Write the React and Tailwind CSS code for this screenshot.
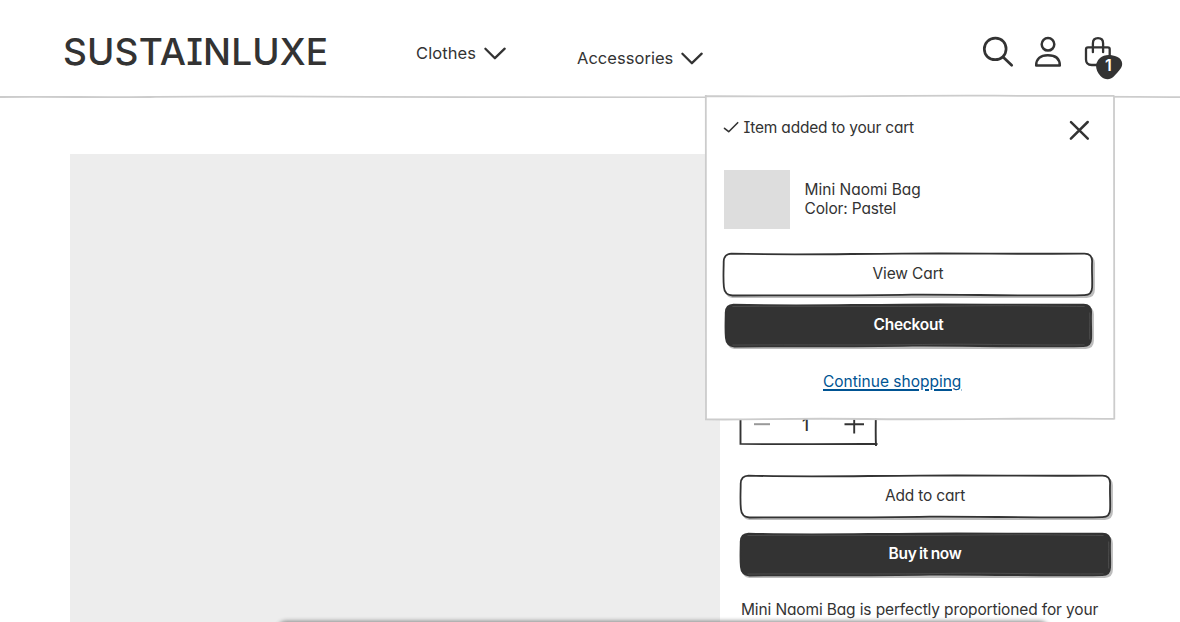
import React from "react";

const FONT = "font-['Inter','Liberation_Sans',sans-serif] [font-feature-settings:'cv11','cv08','ss03']";

function SearchIcon() {
  return (
    <svg className="block h-[34px] w-[34px] shrink-0" viewBox="981 35 34 34" fill="none" stroke="#333" strokeWidth="2.7" strokeLinecap="round">
      <path d="M995.3 38.2C1002 38.1 1006.2 43 1006.1 49C1006 55.2 1001.3 59.7 995.2 59.7C989 59.7 984.3 55.2 984.3 49C984.3 42.9 989 38.3 995.3 38.2Z" />
      <path d="M1003.3 57.2L1011.7 65.3" />
    </svg>
  );
}

function PersonIcon() {
  return (
    <svg className="block h-[34px] w-[30px] shrink-0" viewBox="1033 35 30 34" fill="none" stroke="#333" strokeWidth="2.5" strokeLinejoin="round">
      <circle cx="1048" cy="44.3" r="6.3" />
      <path d="M1036.2 65.4C1036.1 58.9 1040.3 55.2 1047.8 55.2C1055.5 55.2 1059.8 58.9 1059.8 65.4Z" />
    </svg>
  );
}

function BagIcon() {
  return (
    <svg className="block h-[34px] w-[30px] shrink-0" viewBox="1083 35 30 34" fill="none" stroke="#333" strokeWidth="2.3" strokeLinecap="round" strokeLinejoin="round">
      <path d="M1088 47.4H1107.8Q1109.8 47.4 1109.7 49.4V59.5Q1109.7 65 1104 65H1091.7Q1086 65 1086 59.5V49.4Q1086 47.4 1088 47.4Z" />
      <path d="M1092.9 52.2V43.4C1092.9 39.6 1094.9 38.2 1098 38.2C1101.1 38.2 1103.1 39.6 1103.1 43.4V52.2" />
    </svg>
  );
}

function Chevron() {
  return (
    <svg className="block h-[14px] w-[24px] shrink-0" viewBox="0 0.5 24 14" fill="none" stroke="#333" strokeWidth="2.3" strokeLinecap="round" strokeLinejoin="round">
      <path d="M2.4 2.3L11.9 11.7L21.7 2.2" />
    </svg>
  );
}

function SketchButton({ label, filled, className, textClassName }) {
  return (
    <button className={`relative block h-[44px] shrink-0 ${className}`}>
      <svg className="absolute inset-0 h-[48px] w-full overflow-visible" viewBox="0.5 0.5 372 48" preserveAspectRatio="none" fill="none">
        <path d="M10 3H365Q373.4 3 373.4 11V37Q373.4 45.4 365 45.4H10Q3 45 3 37V11Q3 3 10 3Z" fill="#bdbdbd" />
        <path
          d="M9 1.2C70 2.6 110 1.5 180 1.1C250 .6 290 1.7 363 1.1Q370.8 1.2 370.6 9C370.1 18 371 26 370.6 35Q370.4 42.8 362.5 42.6C300 43.8 240 41.7 190 42.1C120 43.5 60 42.5 10 43Q2 42.5 1.4 34.5C.5 25 1.2 17 1.2 9Q1.5 1.5 9 1.2Z"
          fill={filled ? "#333" : "#fff"}
          stroke="#333"
          strokeWidth="1.8"
        />
        {filled && <path d="M8 3C80 2.3 160 3.5 230 2.6S320 2.6 364 3M369.2 9C369.5 18 368.8 28 369.2 36M8 41.6C80 41 140 42 200 41S300 42 364 41.4" stroke="#666" strokeWidth=".5" />}
      </svg>
      <span className={`absolute inset-x-0 top-[11px] whitespace-nowrap text-center text-[15.5px] leading-[20px] ${textClassName}`}>{label}</span>
    </button>
  );
}

function Header() {
  return (
    <header className="relative flex h-[98px] shrink-0 items-start pl-[63px]">
      <h1 className="mt-[29px] w-[353px] whitespace-nowrap text-[37px] font-medium leading-[46px] tracking-[0.15px]">SUSTAINLUXE</h1>
      <div className="mt-[43px] flex w-[161px] items-start">
        <span className="w-[67px] whitespace-nowrap text-[16.5px] leading-5 tracking-[0.1px]">Clothes</span>
        <div className="mt-[4px]"><Chevron /></div>
      </div>
      <div className="mt-[48px] flex w-[404px] items-start">
        <span className="w-[103px] whitespace-nowrap text-[16.5px] leading-5 tracking-[0.03px]">Accessories</span>
        <div className="mt-[4px]"><Chevron /></div>
      </div>
      <div className="mt-[35px] flex">
        <SearchIcon />
        <div className="ml-[18px]"><PersonIcon /></div>
        <div className="relative ml-[20px]">
          <BagIcon />
          <svg className="absolute left-[13px] top-[19px] h-[26px] w-[27px]" viewBox="0 0 27 26">
            <path d="M4 4C8 .2 15 .2 21 2.8C26 5 27.5 10 25 14C22.5 17.5 20 20 17.5 22.8C14 26.3 8.5 26 4.5 22C.5 18 -.8 12 .6 9Q1.5 6 4 4Z" fill="#333" />
          </svg>
          <span className="absolute left-[18.5px] top-[20px] w-[14px] text-center text-[16px] font-semibold leading-5 text-white">1</span>
        </div>
      </div>
      <svg className="absolute bottom-0 left-0 h-[4px] w-full" viewBox="0 0 1180 4" fill="none">
        <path d="M0 3C50 2.3 100 3.6 150 3S250 1.7 370 2.8S520 2.2 700 3.3S1050 1.4 1180 3.2" stroke="#ccc" strokeWidth="1.8" />
      </svg>
    </header>
  );
}

function Quantity() {
  return (
    <div className="relative mt-[245px] flex h-[46px] w-[138px] shrink-0 items-start">
      <svg className="absolute inset-0 h-full w-full overflow-visible" viewBox="740 399 138 46" fill="none" stroke="#333">
        <path d="M740.5 400V443.9C785 444.5 810 443.9 877.5 444M875.5 400C876.3 420 875.2 430 876 446" strokeWidth="1.9" />
        <path d="M754 424.2H770" stroke="#999" strokeWidth="2" />
        <path d="M844.5 424.2H864M854.2 414V433.5" strokeWidth="1.9" />
      </svg>
      <span className="ml-[60.5px] mt-[15.5px] w-[10px] text-center text-[17px] font-medium leading-5">1</span>
    </div>
  );
}

function CartPopup() {
  return (
    <section className="absolute left-[705px] top-[95px] flex h-[325px] w-[410px] flex-col pl-[18px]">
      <svg className="absolute inset-0 h-full w-full overflow-visible" viewBox="0 0 410 325" fill="none">
        <path d="M1 1C120 2.3 200 .2 290 .6S370 1 409 .8C408.5 100 410 200 409 323.7C330 322 250 325 160 323.8S60 325 .8 324.3C1.5 200 .2 100 1 1Z" fill="#fff" />
        <path d="M0 1C100 2.4 180 .2 290 .7S370 1 409 .8M409 .5C408.2 90 410 200 409.3 324.5M409.3 323.8C330 322.8 250 325 160 324S60 325 0 324.4M.8 0C1.8 100 .2 200 1 325.3" stroke="#ccc" strokeWidth="1.8" />
      </svg>
      <div className="relative flex h-[75px] items-start pt-[23px]">
        <svg className="mt-[3px] block h-[13px] w-[20.5px] shrink-0" viewBox="0 0 20.5 13" fill="none" stroke="#333" strokeWidth="1.6" strokeLinecap="round" strokeLinejoin="round">
          <path d="M1.5 7.3L5.7 10.7L14.7 1.7" />
        </svg>
        <span className="w-[324.5px] whitespace-nowrap text-[15.5px] leading-[19px] tracking-[-0.22px]">Item added to your cart</span>
        <svg className="mt-[1px] block h-[22px] w-[22px]" viewBox="1068 119 22 22" fill="none" stroke="#333" strokeWidth="2.5" strokeLinecap="round">
          <path d="M1071 122.2L1087.8 138.6M1087.7 122L1070.9 138.7" />
        </svg>
      </div>
      <div className="relative flex h-[83px] items-start">
        <div className="ml-[0.5px] h-[59px] w-[66.5px] bg-[#ddd]" />
        <div className="ml-[14.5px] mt-[10px] whitespace-nowrap text-[15.5px] leading-[19px]">
          <p>Mini Naomi Bag</p>
          <p className="tracking-[-0.15px]">Color: Pastel</p>
        </div>
      </div>
      <SketchButton label="View Cart" className="w-[371px]" textClassName="pr-[1px] tracking-[-0.12px]" />
      <SketchButton label="Checkout" filled className="ml-[2px] mt-[7px] w-[368px]" textClassName="pr-[1px] font-semibold text-white tracking-[-0.25px]" />
      <a className="relative ml-[100px] mt-[24px] self-start whitespace-nowrap text-[15.5px] leading-[20px] text-[#005493] underline decoration-[1.5px] underline-offset-[2px]">Continue shopping</a>
    </section>
  );
}

export default function App() {
  return (
    <div className={`relative flex h-[622px] w-[1180px] flex-col overflow-hidden bg-white text-[#333] ${FONT}`}>
      <Header />
      <main className="flex h-[524px] overflow-hidden pl-[70px] pt-[56px]">
        <div className="h-[468px] w-[650px] shrink-0 bg-[#ededed]" />
        <div className="ml-5 flex w-[400px] flex-col">
          <Quantity />
          <SketchButton label="Add to cart" className="mt-[30px] w-[372px]" textClassName="pr-[2px] tracking-[-0.18px]" />
          <SketchButton label="Buy it now" filled className="mt-[14px] w-[372px]" textClassName="pr-[2px] font-semibold text-white tracking-[-0.3px] [word-spacing:-1px]" />
          <p className="ml-px mt-[23px] whitespace-nowrap text-[15.5px] leading-[19px] tracking-[-0.13px]">Mini Naomi Bag is perfectly proportioned for your</p>
        </div>
      </main>
      <CartPopup />
      <div className="absolute left-[278px] top-[622px] h-[20px] w-[770px] rounded-lg shadow-[0_0_4px_1px_#888]" />
    </div>
  );
}
